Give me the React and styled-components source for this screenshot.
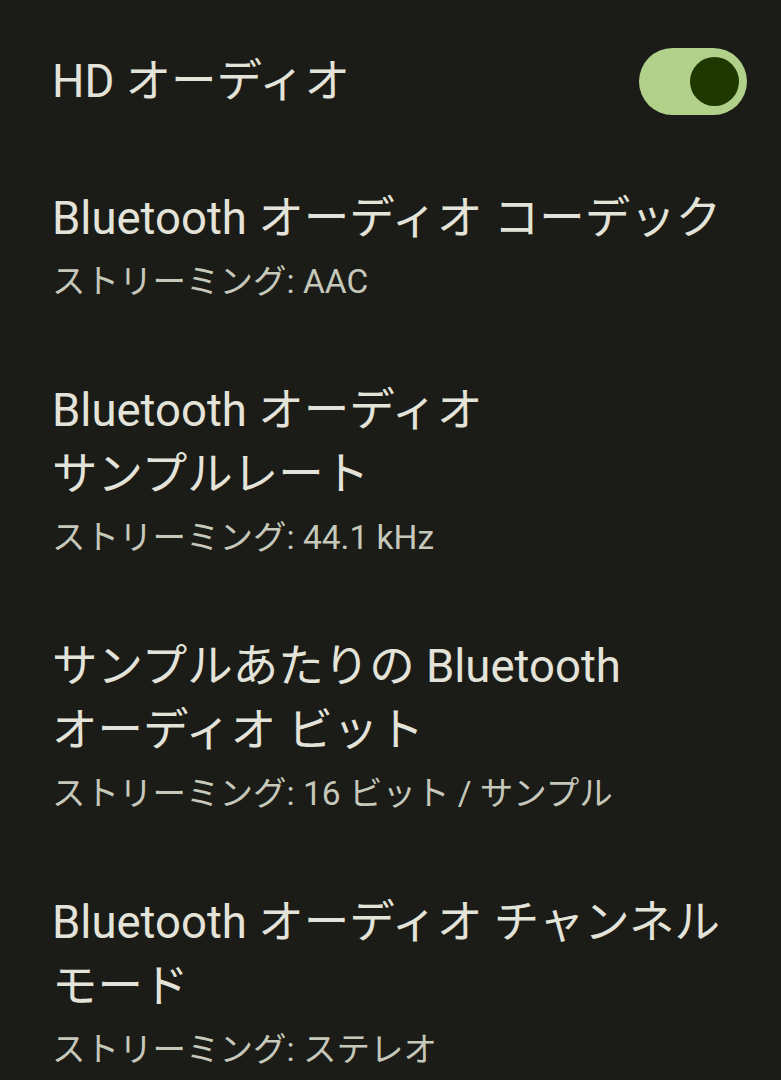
import styled, { createGlobalStyle } from "styled-components";

const GlobalStyle = createGlobalStyle`
  html, body {
    margin: 0;
    background: #1b1c17;
  }
  body {
    font-family: "Roboto", "Noto Sans CJK JP", sans-serif;
  }
`;

const Page = styled.div`
  padding: 12px 34px 0 52px;
  min-height: 1080px;
  box-sizing: border-box;
  background: #1b1c17;
`;

const Row = styled.div`
  display: flex;
  align-items: center;
  justify-content: space-between;
  padding: 36px 0;
`;

const TextBlock = styled.div`
  display: flex;
  flex-direction: column;
`;

const Title = styled.div`
  color: #e4e3d9;
  font-size: 45.5px;
  line-height: 64px;
  white-space: nowrap;
`;

const Summary = styled.div`
  color: #c5c8ba;
  font-size: 33.5px;
  line-height: 50px;
  margin-top: 6px;
`;

const Track = styled.div`
  width: 108px;
  height: 67px;
  border-radius: 34px;
  background: #b1d18a;
  display: flex;
  align-items: center;
  justify-content: flex-end;
  padding-right: 8px;
  box-sizing: border-box;
  flex-shrink: 0;
`;

const Knob = styled.div`
  width: 49px;
  height: 49px;
  border-radius: 50%;
  background: #1f3701;
`;

const settings = [
  { title: ["Bluetooth オーディオ コーデック"], summary: "ストリーミング: AAC" },
  { title: ["Bluetooth オーディオ", "サンプルレート"], summary: "ストリーミング: 44.1 kHz" },
  { title: ["サンプルあたりの Bluetooth", "オーディオ ビット"], summary: "ストリーミング: 16 ビット / サンプル" },
  { title: ["Bluetooth オーディオ チャンネル", "モード"], summary: "ストリーミング: ステレオ" },
];

export default function App() {
  return (
    <>
      <GlobalStyle />
      <Page>
        <Row>
          <Title>HD オーディオ</Title>
          <Track>
            <Knob />
          </Track>
        </Row>
        {settings.map((s) => (
          <Row key={s.summary}>
            <TextBlock>
              <Title>
                {s.title.map((line, i) => (
                  <div key={i}>{line}</div>
                ))}
              </Title>
              <Summary>{s.summary}</Summary>
            </TextBlock>
          </Row>
        ))}
      </Page>
    </>
  );
}
